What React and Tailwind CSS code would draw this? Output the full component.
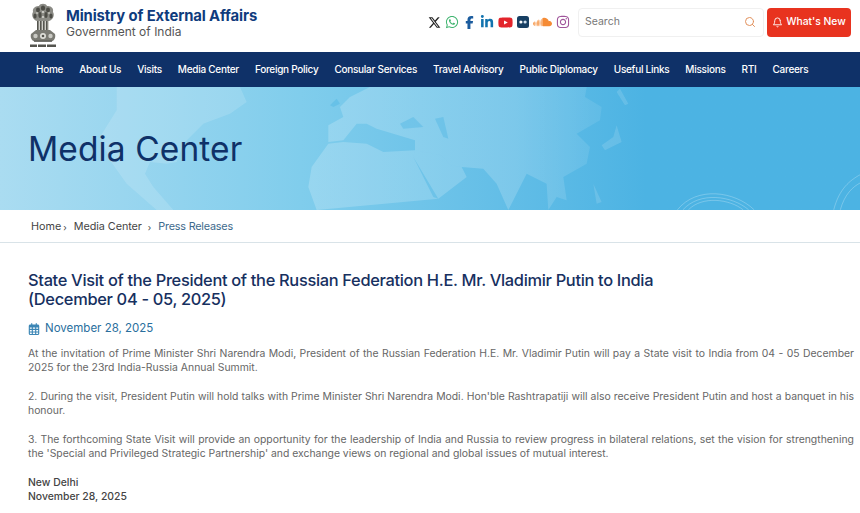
import React from "react";
import { FaXTwitter, FaWhatsapp, FaFacebookF, FaLinkedinIn, FaYoutube, FaSoundcloud, FaInstagram, FaRegCalendarDays } from "react-icons/fa6";
import { FiSearch, FiBell } from "react-icons/fi";

const font = { fontFamily: '"Inter","Open Sans",sans-serif' };
const navItems = ["Home","About Us","Visits","Media Center","Foreign Policy","Consular Services","Travel Advisory","Public Diplomacy","Useful Links","Missions","RTI","Careers"];

function Flickr() {
  return (
    <svg width="12" height="12" viewBox="0 0 12 12">
      <rect width="12" height="12" rx="2.5" fill="#173f63" />
      <circle cx="3.9" cy="6" r="1.6" fill="#fff" />
      <circle cx="8.1" cy="6" r="1.6" fill="#cfe0ee" />
    </svg>
  );
}

function Emblem() {
  return (
    <svg width="28" height="46" viewBox="0 0 28 46" className="shrink-0">
      <path d="M4 9C3 4 8 3 10 3C11 0 17 0 18 3C21 3 25 4 24 9C26 12 24 17 20 18H8C4 17 2 12 4 9Z" fill="#8b8b85" />
      <g fill="#4d4d47">
        <ellipse cx="9" cy="7" rx="2" ry="2.4" /><ellipse cx="14" cy="5" rx="2.2" ry="2.6" /><ellipse cx="19" cy="7" rx="2" ry="2.4" />
        <ellipse cx="6" cy="13" rx="1.6" ry="2.6" /><ellipse cx="11" cy="12" rx="1.6" ry="3" /><ellipse cx="17" cy="12" rx="1.6" ry="3" /><ellipse cx="22" cy="13" rx="1.6" ry="2.6" />
      </g>
      <g fill="#e4e4de">
        <circle cx="8" cy="10" r="0.8" /><circle cx="14" cy="9" r="0.9" /><circle cx="20" cy="10" r="0.8" /><circle cx="14" cy="14" r="0.9" />
      </g>
      <rect x="8" y="18" width="12" height="10" fill="#d0d0ca" />
      <g fill="#55554f">
        <rect x="8" y="18" width="1.6" height="10" /><rect x="11" y="18" width="1.6" height="10" /><rect x="14" y="18" width="1.6" height="10" /><rect x="17" y="18" width="1.6" height="10" />
      </g>
      <path d="M7 27H21L26 31C27 35 25 38 22 38.5H6C3 38 1 35 2 31Z" fill="#7a7a73" />
      <circle cx="14" cy="33" r="3" fill="#deded8" /><circle cx="14" cy="33" r="1.3" fill="#55554f" />
      <circle cx="6.5" cy="33" r="2.2" fill="#c9c9c3" /><circle cx="21.5" cy="33" r="2.2" fill="#c9c9c3" />
      <rect x="5" y="37.5" width="18" height="1.2" fill="#55554f" />
      <g fill="#55554f">
        <rect x="1" y="41.5" width="7" height="2.5" /><rect x="9" y="41.5" width="8" height="2.5" /><rect x="18" y="41.5" width="9" height="2.5" />
      </g>
    </svg>
  );
}

function MapArt() {
  return (
    <svg viewBox="0 0 860 123" className="absolute inset-0 w-full h-full">
      <defs>
        <linearGradient id="land" gradientUnits="userSpaceOnUse" x1="0" x2="1000" y1="0" y2="0">
          <stop offset="0" stopColor="#fff" stopOpacity="0.2" />
          <stop offset="0.65" stopColor="#fff" stopOpacity="0.17" />
          <stop offset="0.9" stopColor="#fff" stopOpacity="0.08" />
        </linearGradient>
      </defs>
      <path transform="translate(60 0) scale(0.3333)" fill="#fff" fillOpacity="0.14" d="M170 0L540 0L560 45L510 80L430 110L370 170L350 225L320 230L270 225L255 260L280 300L340 369L290 369L200 290L150 220L120 150L170 70Z" />
      <g transform="translate(300 0) scale(0.3333)">
        <path fill="url(#land)" d="M85 170L35 240L25 300L50 369L415 335L400 330L340 210L345 190L250 195L200 170L130 165Z" />
        <path fill="url(#land)" d="M85 165L85 115L130 90L120 60L150 30L210 0L860 0L855 30L905 60L900 100L830 140L870 180L860 230L790 270L800 340L770 330L745 369L740 290L680 260L640 340L625 369L590 290L550 245L485 240L450 235L425 205L345 190L345 160L280 140L230 125L200 110L170 110L130 160Z" />
        <path fill="url(#land)" d="M345 190L425 205L450 235L485 240L500 270L415 335L340 210Z" />
        <g fill="#4cb3e3" fillOpacity="0.4">
          <path d="M300 110L340 90L370 120L310 125Z" />
          <path d="M405 95L430 90L445 155L430 150Z" />
          <path d="M90 55L110 35L120 50L100 60Z" />
        </g>
        <path fill="#fff" fillOpacity="0.13" d="M960 5L985 50L975 55L950 15Z M950 115L965 165L915 190L905 175L940 150Z M880 290L905 345L890 350Z" />
      </g>
      <g transform="scale(0.5485)" fill="none" stroke="#fff" strokeOpacity="0.3" strokeWidth="1.5">
        <path d="M1235 224C1270 180 1340 190 1375 224" />
        <path d="M1245 224C1275 190 1335 198 1365 224" />
        <path d="M1255 224C1280 198 1330 204 1355 224" />
        <path d="M1520 224C1530 185 1550 170 1568 160" />
        <path d="M1532 224C1540 195 1555 182 1568 175" />
      </g>
    </svg>
  );
}

export default function App() {
  return (
    <div className="w-[860px] h-[513px] overflow-hidden bg-white" style={font}>
      <header className="h-[52px] flex items-center justify-between pl-[29px] pr-[9px]">
        <div className="flex items-center gap-[9px]">
          <Emblem />
          <div className="-mt-[7px]">
            <div className="text-[14.8px] leading-[18px] font-bold text-[#0f3b7d] tracking-[-0.1px]">Ministry of External Affairs</div>
            <div className="text-[12px] leading-[13px] text-[#555]">Government of India</div>
          </div>
        </div>
        <div className="flex items-center mb-[8px]">
          <div className="flex items-center gap-[4px] mr-[8px]">
            <FaXTwitter className="text-[13px] text-[#222]" />
            <FaWhatsapp className="text-[14px] text-[#3fb46f]" />
            <FaFacebookF className="text-[13px] text-[#1b5c9e]" />
            <FaLinkedinIn className="text-[14px] text-[#1273ae]" />
            <FaYoutube className="text-[15px] text-[#e3242b]" />
            <Flickr />
            <FaSoundcloud className="text-[19px] text-[#f58b35]" />
            <FaInstagram className="text-[14px] text-[#a0569b]" />
          </div>
          <div className="w-[186px] h-[29px] rounded-[4px] border border-[#f0f0f0] flex items-center justify-between pl-[6px] pr-[7px] mr-[3px]">
            <span className="text-[10.5px] text-[#777]">Search</span>
            <FiSearch className="text-[12px] text-[#e2915c]" />
          </div>
          <div className="w-[84px] h-[29px] rounded-[4px] bg-[#e8331f] text-white flex items-center justify-center gap-[3px] text-[10.3px] font-medium">
            <FiBell className="text-[11px]" />
            What's New
          </div>
        </div>
      </header>
      <nav className="h-[35px] bg-[#0f3168] flex items-center pl-[36px] gap-[16px] text-white text-[10px] font-medium tracking-[-0.27px]">
        {navItems.map((n) => <span key={n} className="whitespace-nowrap">{n}</span>)}
      </nav>
      <section className="relative h-[123px] bg-gradient-to-r from-[#aadcf1] via-[#80cdec] via-35% to-[#4cb3e3] to-[75%] overflow-hidden flex items-center pl-[28px]">
        <MapArt />
        <h1 className="relative text-[33.5px] leading-none text-[#0f3168] tracking-[0.1px] mt-[2px]">Media Center</h1>
      </section>
      <div className="h-[33px] pt-[3px] border-b border-[#d9e3e8] flex items-center pl-[31px] text-[10.8px] text-[#444]">
        <span>Home</span><span className="ml-[2px] text-[9px]">›</span>
        <span className="ml-[7px] tracking-[-0.05px]">Media Center</span><span className="ml-[6px] text-[9px]">›</span>
        <span className="ml-[7px] text-[#3d6a8c] tracking-[-0.2px]">Press Releases</span>
      </div>
      <main className="px-[28px] pr-[6px] pt-[28px]">
        <h2 className="text-[16.4px] leading-[19px] font-medium text-[#17305f] tracking-[-0.31px]">
          State Visit of the President of the Russian Federation H.E. Mr. Vladimir Putin to India<br />(December 04 - 05, 2025)
        </h2>
        <div className="mt-[12px] flex items-center gap-[5px] text-[#2a6f9e] text-[11.5px] leading-[15px]">
          <FaRegCalendarDays className="text-[12px] text-[#3c86b5]" />
          November 28, 2025
        </div>
        <p className="mt-[11px] text-[10.4px] leading-[14.35px] text-[#666] text-justify">
          At the invitation of Prime Minister Shri Narendra Modi, President of the Russian Federation H.E. Mr. Vladimir Putin will pay a State visit to India from 04 - 05 December 2025 for the 23rd India-Russia Annual Summit.
          <br /><br />
          2. During the visit, President Putin will hold talks with Prime Minister Shri Narendra Modi. Hon'ble Rashtrapatiji will also receive President Putin and host a banquet in his honour.
          <br /><br />
          3. The forthcoming State Visit will provide an opportunity for the leadership of India and Russia to review progress in bilateral relations, set the vision for strengthening the 'Special and Privileged Strategic Partnership' and exchange views on regional and global issues of mutual interest.
          <br /><br />
          <span className="font-medium text-[#444]">New Delhi<br />November 28, 2025</span>
        </p>
      </main>
    </div>
  );
}
